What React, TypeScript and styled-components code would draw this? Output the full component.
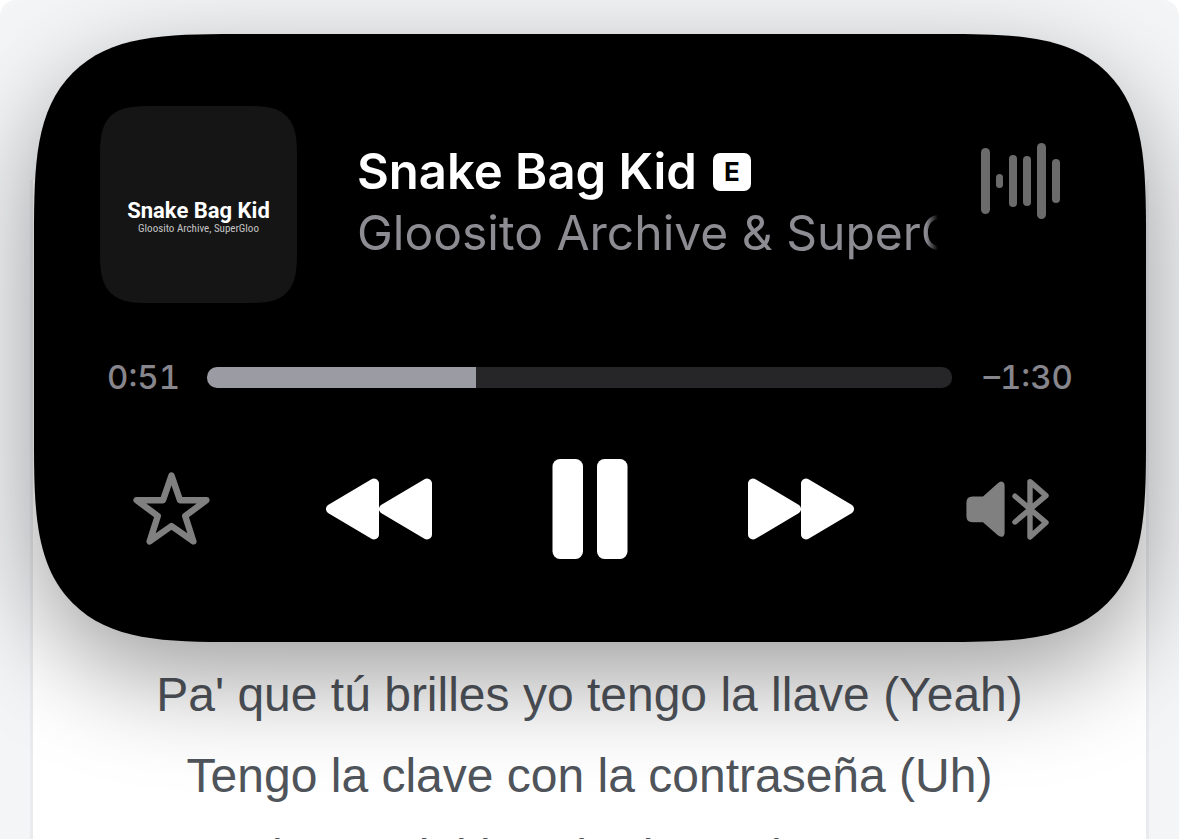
import React, { useState } from "react";
import styled, { createGlobalStyle } from "styled-components";

const GlobalStyle = createGlobalStyle`
  * { box-sizing: border-box; }
  body { margin: 0; background: #ffffff; }
  button { appearance: none; border: 0; padding: 0; background: none; cursor: pointer; }
`;

const Page = styled.main`
  position: relative;
  height: 100vh;
  min-height: 700px;
  overflow: hidden;
  padding: 180px 30px 0;
  border-radius: 16px 16px 0 0;
  background: #f4f5f7;
`;

const LyricsPanel = styled.section`
  height: 100%;
  overflow: hidden;
  padding-top: 474px;
  border: solid #e9ebee;
  border-width: 0 3px;
  background: #ffffff;
`;

const LyricLine = styled.p`
  margin: 0;
  font-family: "Liberation Sans", Arial, sans-serif;
  font-size: 48px;
  line-height: 81px;
  text-align: center;
  white-space: nowrap;
  color: #50555c;
`;

const Player = styled.section`
  position: absolute;
  top: 34px;
  left: 34px;
  right: 33px;
  display: flex;
  flex-direction: column;
  padding: 72px 34px 83px;
  border-radius: 130px;
  background: #000000;
  box-shadow: 0 36px 104px rgba(0, 0, 0, 0.38);
  font-family: Inter, "Liberation Sans", sans-serif;
  @supports (corner-shape: superellipse(1.7)) {
    border-radius: 202px;
    corner-shape: superellipse(1.7);
  }
`;

const Header = styled.header`
  display: grid;
  grid-template-columns: 197px minmax(0, 1fr) 79px;
  column-gap: 60px;
  padding: 0 52px 0 32px;
`;

const Artwork = styled.div`
  height: 197px;
  padding-top: 93px;
  border-radius: 36px;
  background: #151515;
  text-align: center;
  white-space: nowrap;
  @supports (corner-shape: superellipse(1.7)) {
    border-radius: 54px;
    corner-shape: superellipse(1.7);
  }
`;

const ArtworkTitle = styled.div`
  font-family: Roboto, sans-serif;
  font-weight: 700;
  font-size: 22px;
  line-height: 24px;
  color: #ffffff;
`;

const ArtworkArtist = styled.div`
  font-family: "Liberation Sans Narrow", "Roboto Condensed", Roboto, sans-serif;
  font-size: 11px;
  line-height: 12px;
  color: #c4c4c4;
`;

const TrackText = styled.div`
  padding-top: 35px;
  margin-right: -17px;
  overflow: hidden;
  white-space: nowrap;
`;

const TitleRow = styled.div`
  display: flex;
  align-items: center;
  gap: 16px;
`;

const Title = styled.h1`
  margin: 0;
  font-size: 49px;
  font-weight: 600;
  line-height: 61px;
  color: #ffffff;
`;

const Explicit = styled.span`
  width: 38px;
  height: 38px;
  border-radius: 7px;
  background: #ffffff;
  color: #000000;
  font-size: 26px;
  font-weight: 700;
  line-height: 38px;
  text-align: center;
`;

const Artist = styled.p`
  margin: 0;
  overflow: hidden;
  font-size: 48px;
  font-weight: 400;
  line-height: 61px;
  color: #8d8c93;
  mask-image: linear-gradient(to left, transparent, #000 12px);
`;

const Wave = styled.svg`
  width: 79px;
  height: 76px;
  margin-top: 37px;
  fill: #6b6b6b;
`;

const Timeline = styled.div`
  display: grid;
  grid-template-columns: 72px minmax(0, 1fr) 93px;
  align-items: center;
  column-gap: 28px;
  margin-top: 54px;
  padding: 0 39px;
`;

const Time = styled.span<{ $end?: boolean }>`
  display: flex;
  justify-content: ${(p) => (p.$end ? "flex-end" : "flex-start")};
  font-size: 33px;
  font-weight: 500;
  font-variant-numeric: tabular-nums;
  line-height: 40px;
  white-space: nowrap;
  color: #87868c;
`;

const Seek = styled.input<{ $percent: number }>`
  appearance: none;
  width: 100%;
  height: 21px;
  margin: 0;
  border-radius: 10px;
  background: linear-gradient(
    to right,
    #9b9ba3 ${(p) => p.$percent}%,
    #262628 ${(p) => p.$percent}%
  );
  &::-webkit-slider-thumb { appearance: none; width: 0; height: 0; }
`;

const Controls = styled.div`
  display: grid;
  grid-template-columns: 207fr 207fr 215fr 207fr 207fr;
  margin-top: 62px;
`;

const Control = styled.button<{ $dim?: boolean }>`
  display: flex;
  align-items: center;
  justify-content: center;
  height: 100px;
  color: ${(p) => (p.$dim ? "#808080" : "#ffffff")};
`;

const bars = [
  { x: 0, w: 9, h: 66 },
  { x: 15, w: 7, h: 14 },
  { x: 28, w: 8, h: 52 },
  { x: 42, w: 8, h: 50 },
  { x: 56, w: 9, h: 76 },
  { x: 71, w: 8, h: 44 },
];

const Waveform = () => (
  <Wave viewBox="0 0 79 76" aria-hidden="true">
    {bars.map((b) => (
      <rect key={b.x} x={b.x} y={38 - b.h / 2} width={b.w} height={b.h} rx={b.w / 2} />
    ))}
  </Wave>
);

const StarIcon = () => (
  <svg width="77" height="76" viewBox="0 0 77 76" fill="none" stroke="currentColor" strokeWidth="6.4" strokeLinejoin="round">
    <path d="M38.5 4.5 L47 29.2 H73.4 L52.2 45 L60.4 70.4 L38.5 55 L16.6 70.4 L24.8 45 L3.6 29.2 H30 Z" />
  </svg>
);

const SkipIcon = ({ back = false }: { back?: boolean }) => (
  <svg width="106" height="62" viewBox="0 0 106 62" fill="currentColor" stroke="currentColor" strokeWidth="10" strokeLinejoin="round">
    {back ? (
      <path d="M5 31 L48 5.5 V56.5 Z M58 31 L101 5.5 V56.5 Z" />
    ) : (
      <path d="M101 31 L58 5.5 V56.5 Z M48 31 L5 5.5 V56.5 Z" />
    )}
  </svg>
);

const PauseIcon = () => (
  <svg width="76" height="100" viewBox="0 0 76 100" fill="currentColor">
    <rect x="0.5" width="30.5" height="100" rx="7.5" />
    <rect x="45" width="30.5" height="100" rx="7.5" />
  </svg>
);

const SpeakerIcon = () => (
  <svg width="84" height="64" viewBox="0 0 84 64">
    <path
      fill="currentColor"
      d="M6.5 19.5 H17 L31.5 6.4 Q34.5 3.8 37 5 Q38.6 6 38.6 8.5 V56 Q38.6 58.5 37 59.4 Q34.5 60.5 31.5 58 L17 45.2 H6.5 Q0.4 45.2 0.4 39 V25.7 Q0.4 19.5 6.5 19.5 Z"
    />
    <path
      fill="none"
      stroke="currentColor"
      strokeWidth="5.4"
      strokeLinecap="round"
      strokeLinejoin="round"
      d="M49 19.2 L80 45.6 L64 60 V4.6 L80 18.6 L49 45"
    />
  </svg>
);

export default function App() {
  const total = 141;
  const [position, setPosition] = useState(51);

  return (
    <>
      <GlobalStyle />
      <Page>
        <LyricsPanel aria-label="Lyrics">
          <LyricLine>Pa' que tú brilles yo tengo la llave (Yeah)</LyricLine>
          <LyricLine>Tengo la clave con la contraseña (Uh)</LyricLine>
          <LyricLine>Si eres del bando de enviar ecos</LyricLine>
        </LyricsPanel>
        <Player aria-label="Now playing">
          <Header>
            <Artwork>
              <ArtworkTitle>Snake Bag Kid</ArtworkTitle>
              <ArtworkArtist>Gloosito Archive, SuperGloo</ArtworkArtist>
            </Artwork>
            <TrackText>
              <TitleRow>
                <Title>Snake Bag Kid</Title>
                <Explicit>E</Explicit>
              </TitleRow>
              <Artist>Gloosito Archive &amp; SuperGloo</Artist>
            </TrackText>
            <Waveform />
          </Header>
          <Timeline>
            <Time>0:51</Time>
            <Seek
              type="range"
              aria-label="Playback position"
              min={0}
              max={total}
              value={position}
              $percent={(position / total) * 100}
              onChange={(e) => setPosition(Number(e.target.value))}
            />
            <Time $end>–1:30</Time>
          </Timeline>
          <Controls>
            <Control $dim aria-label="Favorite"><StarIcon /></Control>
            <Control aria-label="Previous"><SkipIcon back /></Control>
            <Control aria-label="Pause"><PauseIcon /></Control>
            <Control aria-label="Next"><SkipIcon /></Control>
            <Control $dim aria-label="Bluetooth output"><SpeakerIcon /></Control>
          </Controls>
        </Player>
      </Page>
    </>
  );
}
